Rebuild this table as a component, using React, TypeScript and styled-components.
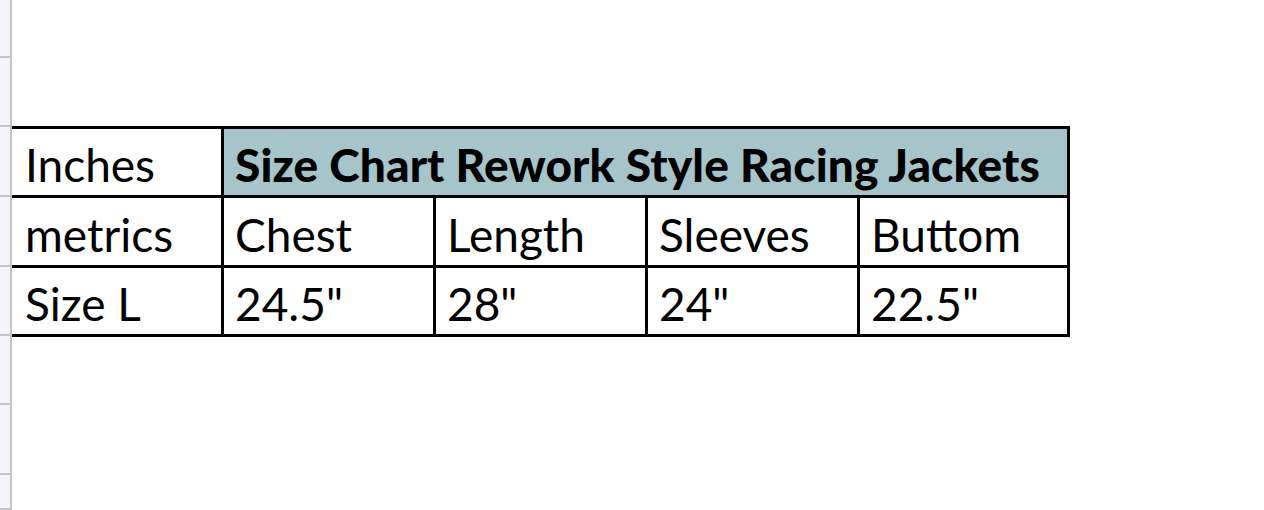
import React from "react";
import styled, { createGlobalStyle } from "styled-components";

const Global = createGlobalStyle`
  html, body { margin: 0; padding: 0; background: #ffffff; }
  body { font-family: Lato, "Liberation Sans", sans-serif; color: #000; }
`;

const Page = styled.div`
  display: flex;
  width: 1264px;
  height: 510px;
  overflow: hidden;
`;

const Gutter = styled.div`
  width: 10px;
  flex: none;
  background: #f4f5fa;
  border-right: 2px solid #c4c4c6;
  display: flex;
  flex-direction: column;
`;

const GutterCell = styled.div<{ $h: number }>`
  height: ${(p) => p.$h}px;
  flex: none;
  box-sizing: border-box;
  border-bottom: 2px solid #c4c4c6;
`;

const Content = styled.div`
  flex: 1;
  padding-top: 126px;
`;

const Sheet = styled.div`
  display: grid;
  grid-template-columns: 212px 212px 212px 212px 210px;
  grid-template-rows: 69px 70px 69px;
  border-top: 3px solid #000;
  width: max-content;
`;

const Cell = styled.div<{ $span?: number; $head?: boolean }>`
  box-sizing: border-box;
  grid-column: span ${(p) => p.$span ?? 1};
  border-right: 3px solid #000;
  border-bottom: 3px solid #000;
  background: ${(p) => (p.$head ? "#a6c5ca" : "#ffffff")};
  display: flex;
  align-items: center;
  padding: 6px 0 0 11px;
  font-size: 46px;
  font-weight: ${(p) => (p.$head ? 900 : 400)};
  letter-spacing: ${(p) => (p.$head ? "0.12px" : "0px")};
  white-space: nowrap;
  line-height: 1;
`;

const FirstCell = styled(Cell)`
  padding-left: 13px;
`;

const ticks = [58, 69, 70, 70, 69, 69, 70, 35];

const rows: string[][] = [
  ["metrics", "Chest", "Length", "Sleeves", "Buttom"],
  ["Size L", '24.5"', '28"', '24"', '22.5"'],
];

export default function App() {
  return (
    <>
      <Global />
      <Page>
        <Gutter>
          {ticks.map((h, i) => (
            <GutterCell key={i} $h={h} />
          ))}
        </Gutter>
        <Content>
          <Sheet>
            <FirstCell>Inches</FirstCell>
            <Cell $span={4} $head>
              Size Chart Rework Style Racing Jackets
            </Cell>
            {rows.map((r, ri) =>
              r.map((t, ci) =>
                ci === 0 ? (
                  <FirstCell key={`${ri}-${ci}`}>{t}</FirstCell>
                ) : (
                  <Cell key={`${ri}-${ci}`}>{t}</Cell>
                )
              )
            )}
          </Sheet>
        </Content>
      </Page>
    </>
  );
}
